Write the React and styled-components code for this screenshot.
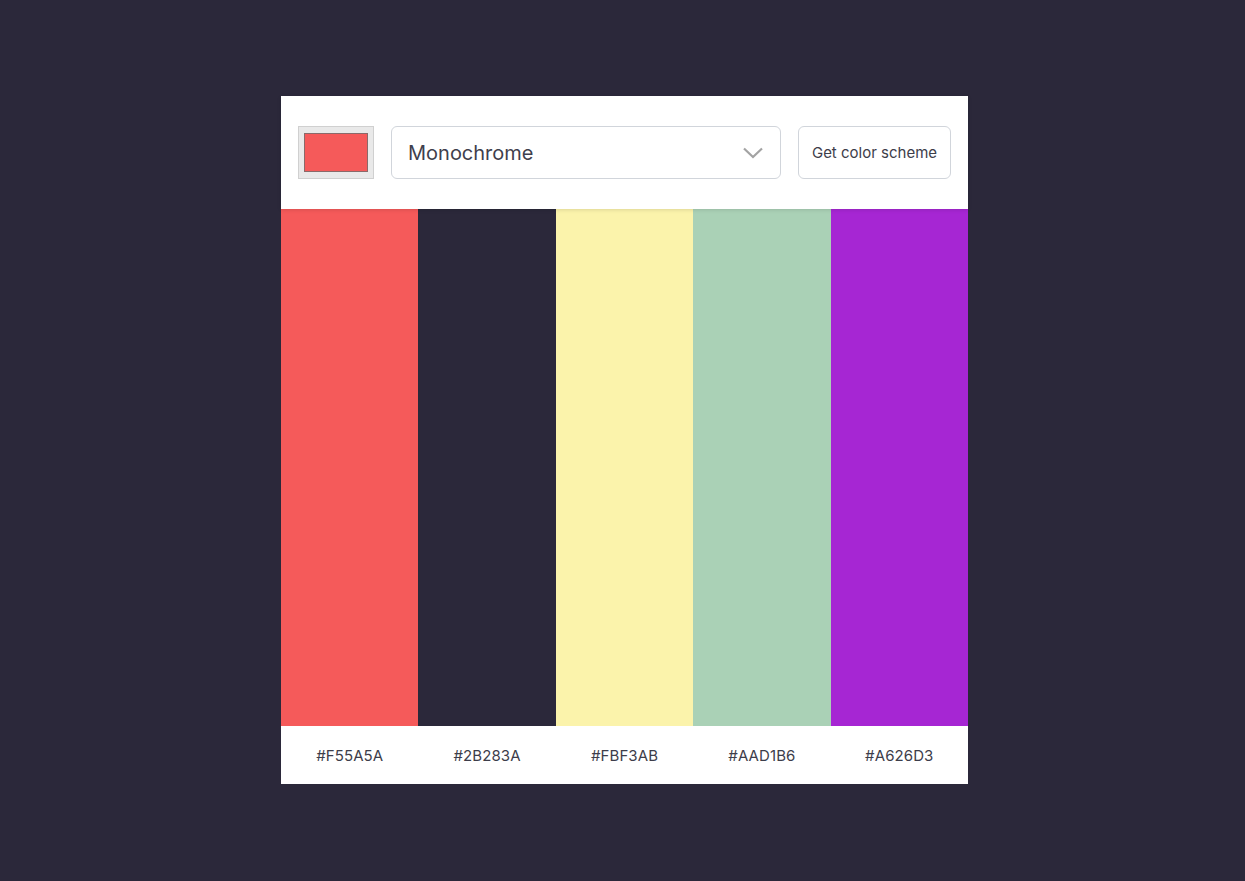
import React, { useState } from 'react';
import styled, { createGlobalStyle } from 'styled-components';

const GlobalStyle = createGlobalStyle`
  html, body {
    margin: 0;
    padding: 0;
    background: #2b283a;
    font-family: Inter, "Noto Sans", sans-serif;
  }
`;

const Page = styled.div`
  min-height: 881px;
  display: flex;
  justify-content: center;
  padding: 96px 0 0 4px;
  box-sizing: border-box;
`;

const Card = styled.main`
  width: 687px;
  height: 688px;
  background: #ffffff;
  display: flex;
  flex-direction: column;
`;

const Toolbar = styled.header`
  height: 113px;
  box-sizing: border-box;
  padding: 30px 17px;
  display: flex;
  align-items: stretch;
  gap: 17px;
  position: relative;
  z-index: 1;
  box-shadow: 0 1px 4px rgba(0, 0, 0, 0.12);
`;

const SwatchInput = styled.div`
  width: 76px;
  box-sizing: border-box;
  background: #e9e9e9;
  border: 1px solid #d0d0d0;
  padding: 6px 5px;
  display: flex;
`;

const SwatchFill = styled.div`
  flex: 1;
  background: ${p => p.$color};
  border: 1px solid #8a6a6a;
`;

const Select = styled.div`
  width: 390px;
  box-sizing: border-box;
  border: 1px solid #d1d5db;
  border-radius: 6px;
  display: flex;
  align-items: center;
  justify-content: space-between;
  padding: 0 17px 0 16px;
  font-size: 20px;
  color: #3f3f4d;
`;

const Button = styled.button`
  width: 153px;
  box-sizing: border-box;
  border: 1px solid #d1d5db;
  border-radius: 6px;
  background: #ffffff;
  font-family: Inter, "Noto Sans", sans-serif;
  font-size: 15px;
  color: #3d3d4a;
  padding: 0;
  cursor: pointer;
`;

const Bars = styled.section`
  flex: 1;
  display: grid;
  grid-template-columns: repeat(5, 1fr);
`;

const Bar = styled.div`
  background: ${p => p.$color};
`;

const Footer = styled.footer`
  height: 58px;
  display: grid;
  grid-template-columns: repeat(5, 1fr);
  align-items: center;
`;

const Hex = styled.span`
  text-align: center;
  font-size: 15px;
  color: #3d3d4a;
  letter-spacing: 0.1px;
`;

const colors = ['#F55A5A', '#2B283A', '#FBF3AB', '#AAD1B6', '#A626D3'];

export default function App() {
  const [seed] = useState('#F55A5A');
  return (
    <>
      <GlobalStyle />
      <Page>
        <Card>
          <Toolbar>
            <SwatchInput>
              <SwatchFill $color={seed} />
            </SwatchInput>
            <Select>
              <span>Monochrome</span>
              <svg width="20" height="12" viewBox="0 0 20 12" fill="none">
                <path d="M1 1.5 L10 10 L19 1.5" stroke="#a3a3a3" strokeWidth="2.2" />
              </svg>
            </Select>
            <Button>Get color scheme</Button>
          </Toolbar>
          <Bars>
            {colors.map(c => <Bar key={c} $color={c} />)}
          </Bars>
          <Footer>
            {colors.map(c => <Hex key={c}>{c}</Hex>)}
          </Footer>
        </Card>
      </Page>
    </>
  );
}
